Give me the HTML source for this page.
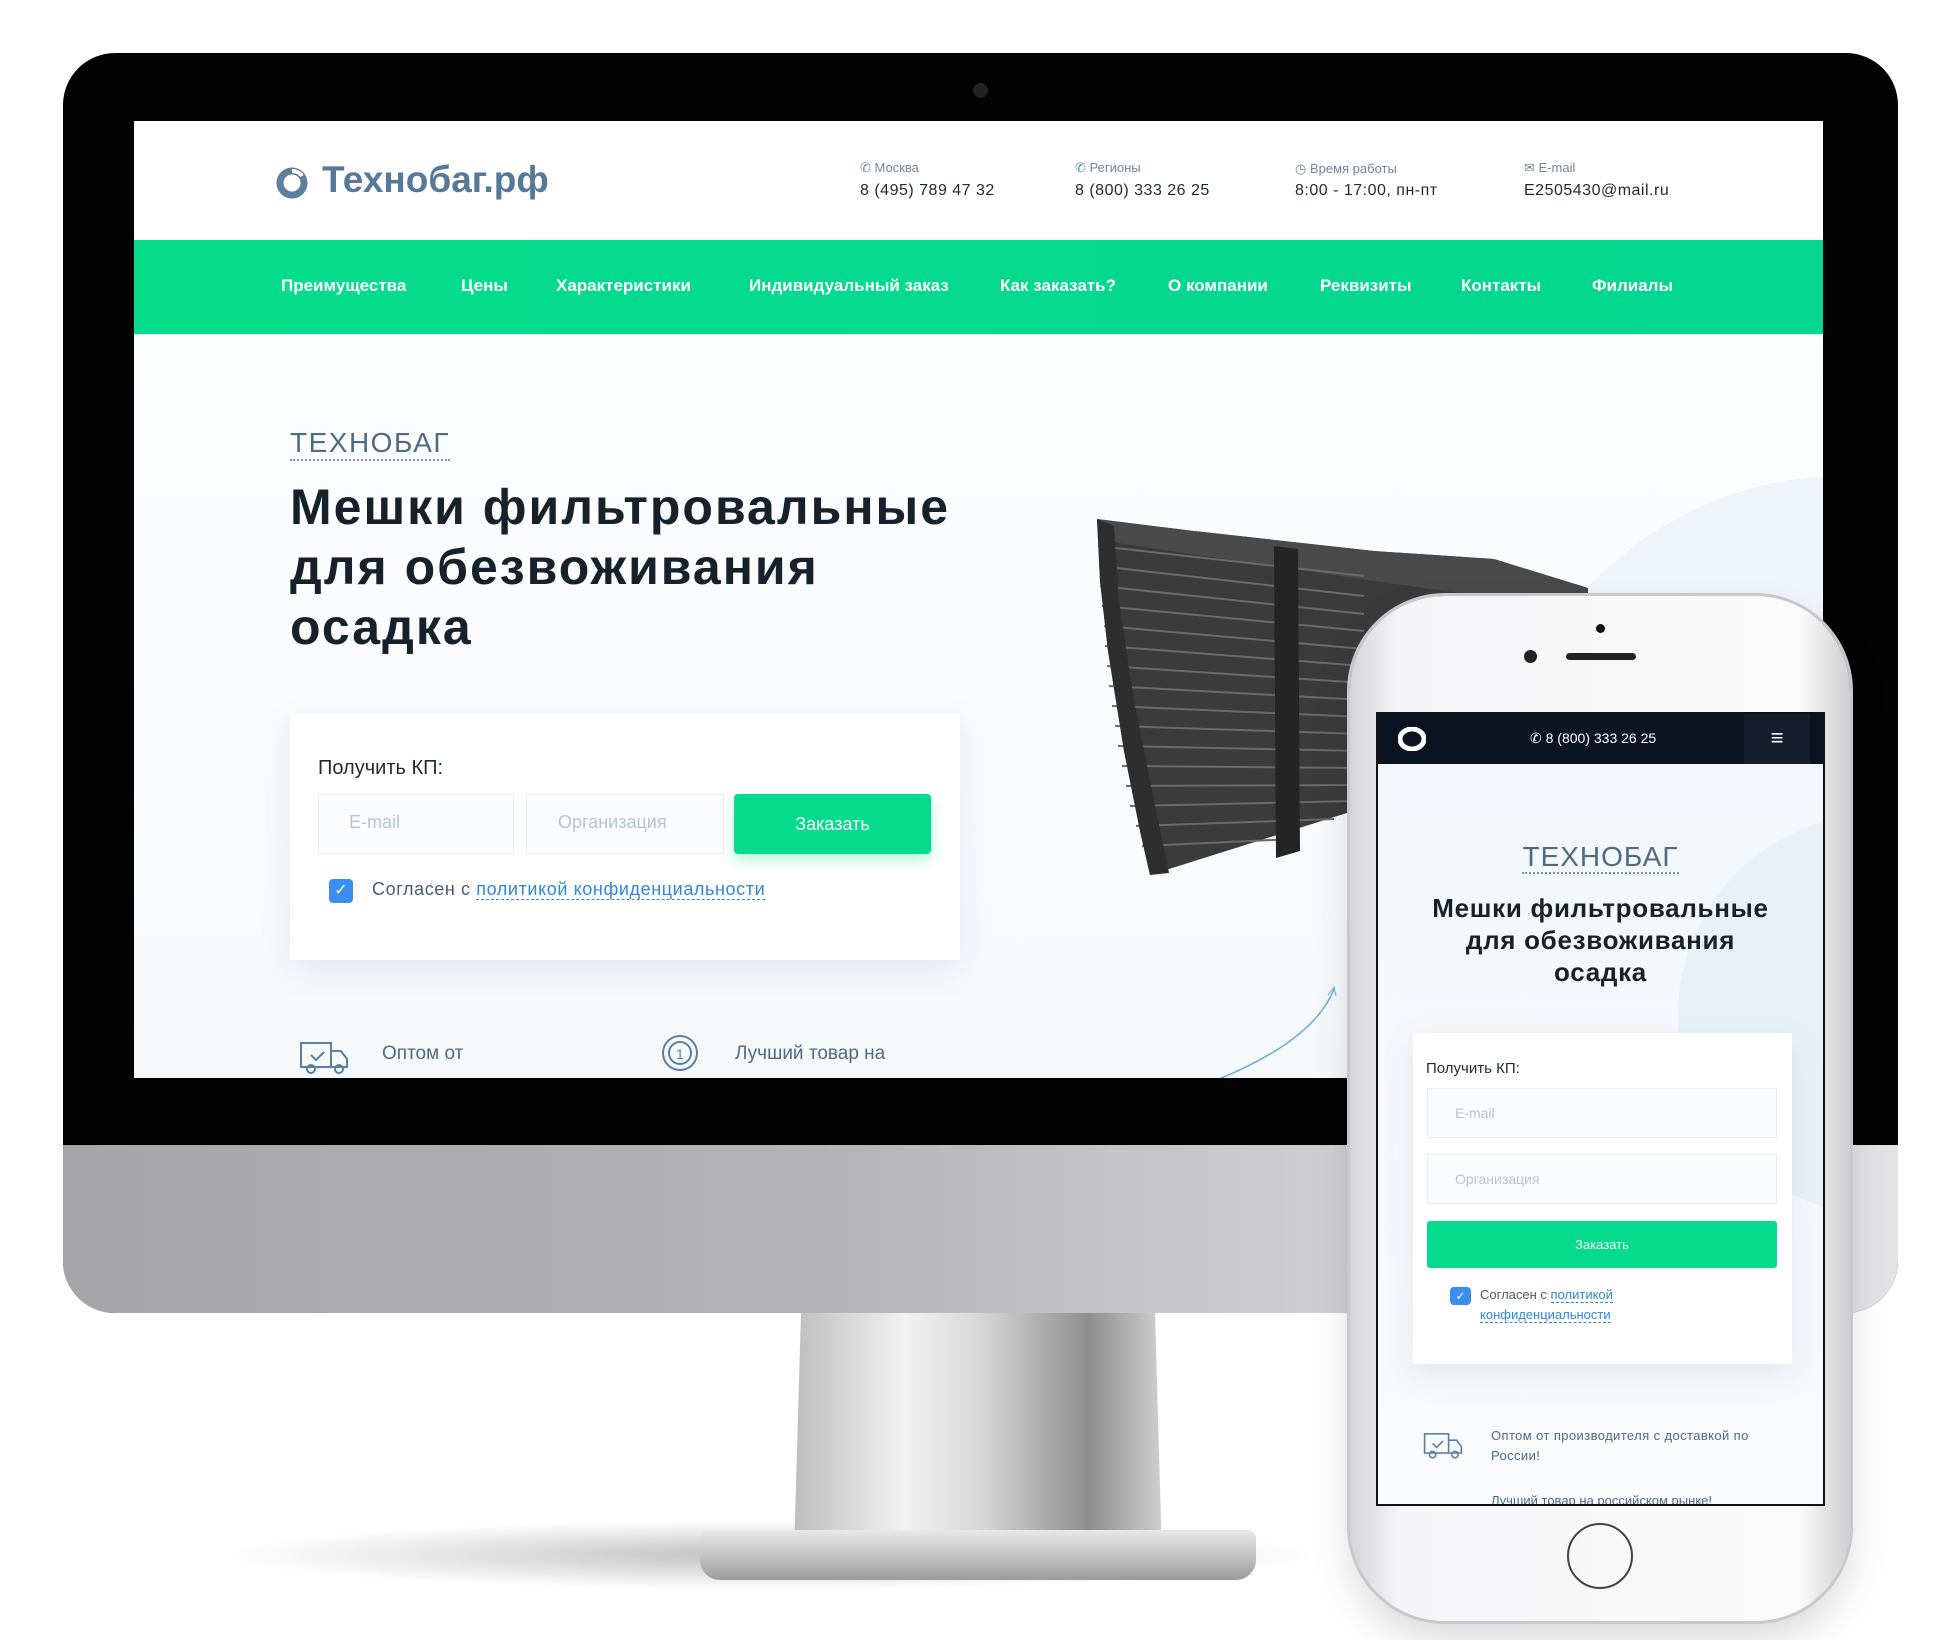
<!DOCTYPE html>
<html><head><meta charset="utf-8"><style>
*{margin:0;padding:0;box-sizing:border-box}
body{width:1960px;height:1640px;background:#fff;position:relative;overflow:hidden;font-family:"Liberation Sans",sans-serif}
.a{position:absolute}
.nav span{position:absolute;top:276px;color:#fff;font-size:17px;font-weight:bold;white-space:nowrap}
.lab{font-size:13px;color:#6f86a0}
.val{font-size:16px;color:#1d2a36}
</style></head><body>
<div class="a" style="left:220px;top:1520px;width:1100px;height:70px;border-radius:50%;background:radial-gradient(ellipse,rgba(0,0,0,.25),rgba(0,0,0,0) 70%)"></div>
<div class="a" style="left:794px;top:1300px;width:368px;height:255px;background:linear-gradient(90deg,#bdbdbd,#f2f2f2 30%,#d8d8d8 50%,#8e8e8e 80%,#cfcfcf);clip-path:polygon(2% 0,98% 0,100% 100%,0 100%)"></div>
<div class="a" style="left:700px;top:1530px;width:556px;height:50px;border-radius:8px 8px 20px 20px;background:linear-gradient(180deg,#e8e8e8,#bdbdbd 60%,#9a9a9a)"></div>
<div class="a" style="left:63px;top:53px;width:1835px;height:1260px;border-radius:52px;background:#030303;overflow:hidden">
  <div class="a" style="left:0;top:1092px;width:100%;height:168px;background:linear-gradient(90deg,#a6a6a9,#b3b3b6 40%,#d0d0d2 70%,#e4e4e6)"></div>
</div>
<div class="a" style="left:973px;top:83px;width:15px;height:15px;border-radius:50%;background:#222"></div>
<div class="a" style="left:134px;top:121px;width:1689px;height:957px;background:linear-gradient(180deg,#fff,#f6f9fc);overflow:hidden">
  <div class="a" style="left:1360px;top:355px;width:700px;height:700px;border-radius:50%;background:#eef4f9"></div>
  <div class="a" style="left:0;top:0;width:100%;height:119px;background:#fff"></div>
  <svg class="a" style="left:141px;top:45px" width="34" height="34" viewBox="0 0 34 34"><circle cx="17" cy="17" r="12" fill="none" stroke="#5d7e9c" stroke-width="7"/><path d="M17 5 A12 12 0 0 1 27 10" stroke="#fff" stroke-width="4" fill="none"/></svg>
  <div class="a" style="left:188px;top:38px;font-size:37px;font-weight:bold;color:#56799a">Технобаг.рф</div>
  <div class="a lab" style="left:726px;top:39px">✆ Москва</div><div class="a val" style="left:726px;top:61px;letter-spacing:.5px">8 (495) 789 47 32</div>
  <div class="a lab" style="left:941px;top:39px">✆ Регионы</div><div class="a val" style="left:941px;top:61px;letter-spacing:.5px">8 (800) 333 26 25</div>
  <div class="a lab" style="left:1161px;top:40px">◷ Время работы</div><div class="a val" style="left:1161px;top:61px;letter-spacing:.5px">8:00 - 17:00, пн-пт</div>
  <div class="a lab" style="left:1390px;top:39px">✉ E-mail</div><div class="a val" style="left:1390px;top:61px;letter-spacing:.5px">E2505430@mail.ru</div>
  <div class="a" style="left:0;top:119px;width:100%;height:94px;background:linear-gradient(90deg,#05dc8c,#02d68f)"></div>
  <div class="nav" style="position:absolute;left:-134px;top:-121px">
    <span style="left:281px">Преимущества</span><span style="left:461px">Цены</span><span style="left:556px">Характеристики</span><span style="left:749px">Индивидуальный заказ</span><span style="left:1000px">Как заказать?</span><span style="left:1168px">О компании</span><span style="left:1320px">Реквизиты</span><span style="left:1461px">Контакты</span><span style="left:1592px">Филиалы</span>
  </div>
  <div class="a" style="left:156px;top:306px;font-size:28px;color:#4d6a86;letter-spacing:1.5px;border-bottom:2px dotted #7b93aa;line-height:32px">ТЕХНОБАГ</div>
  <div class="a" style="left:156px;top:356px;font-size:50px;font-weight:bold;color:#17212b;line-height:60px;letter-spacing:2px">Мешки фильтровальные<br>для обезвоживания<br>осадка</div>
  <div class="a" style="left:156px;top:592px;width:670px;height:247px;background:#fff;box-shadow:0 10px 30px rgba(80,100,130,.12)"></div>
  <div class="a" style="left:184px;top:636px;font-size:20px;color:#1d2a36">Получить КП:</div>
  <div class="a" style="left:184px;top:673px;width:196px;height:60px;border:1px solid #e6ebf0;background:#fbfcfd;color:#b7c4cf;font-size:18px;padding:17px 30px">E-mail</div>
  <div class="a" style="left:392px;top:673px;width:198px;height:60px;border:1px solid #e6ebf0;background:#fbfcfd;color:#b7c4cf;font-size:18px;padding:17px 31px">Организация</div>
  <div class="a" style="left:600px;top:673px;width:197px;height:60px;border-radius:4px;background:#05db8c;color:#fff;font-size:18px;text-align:center;line-height:60px;box-shadow:0 6px 14px rgba(5,219,140,.3)">Заказать</div>
  <div class="a" style="left:195px;top:758px;width:24px;height:24px;border-radius:4px;background:#3b8ef0;color:#fff;font-size:16px;text-align:center;line-height:24px">✓</div>
  <div class="a" style="left:238px;top:758px;font-size:18px;color:#4a5c6d;letter-spacing:.6px">Согласен с <span style="color:#2f86e0;border-bottom:1px dashed #2f86e0">политикой конфиденциальности</span></div>
  <svg class="a" style="left:163px;top:916px" width="54" height="40" viewBox="0 0 54 40" fill="none" stroke="#5a7fa2" stroke-width="2"><rect x="4" y="6" width="30" height="24"/><path d="M34 14h10l6 8v8H34"/><circle cx="14" cy="32" r="4"/><circle cx="42" cy="32" r="4"/><path d="M14 18l5 5 8-8"/></svg>
  <div class="a" style="left:248px;top:922px;font-size:19px;color:#4d6a86">Оптом от</div>
  <svg class="a" style="left:524px;top:912px" width="44" height="48" viewBox="0 0 44 48" fill="none" stroke="#5a7fa2" stroke-width="2"><circle cx="22" cy="20" r="17"/><circle cx="22" cy="20" r="11"/><text x="18" y="26" font-size="14" fill="#5a7fa2" stroke="none" font-family="Liberation Sans">1</text></svg>
  <div class="a" style="left:601px;top:922px;font-size:19px;color:#4d6a86">Лучший товар на</div>
  <svg class="a" style="left:1060px;top:860px" width="240" height="100" viewBox="0 0 240 100"><path d="M20 100 Q120 60 140 8" stroke="#6aa6e8" stroke-width="1.5" fill="none"/><path d="M134 14l6-8 2 9" stroke="#6aa6e8" fill="none"/></svg>
  <svg class="a" style="left:940px;top:380px" width="560" height="400" viewBox="0 0 560 400">
    <path d="M23 18 L120 30 L300 50 L420 58 L514 87 L514 250 L276 311 L76 374 L66 330 L50 250 L34 150 L26 80 Z" fill="#3b3b3b"/>
    <path d="M23 18 L120 30 L300 50 L420 58 L514 87 L514 110 L300 80 L30 40 Z" fill="#4a4a4a"/>
    <g stroke="#6a6a6a" stroke-width="2" fill="none">
      <path d="M24 45 L290 75"/><path d="M25 65 L290 95"/><path d="M26 85 L290 113"/><path d="M28 105 L290 130"/><path d="M30 125 L290 148"/><path d="M31 145 L290 165"/><path d="M33 165 L290 182"/><path d="M35 185 L290 199"/><path d="M38 205 L290 216"/><path d="M41 225 L290 233"/><path d="M44 245 L290 250"/><path d="M48 265 L290 267"/><path d="M52 285 L290 284"/><path d="M56 305 L280 300"/><path d="M62 325 L260 318"/><path d="M68 345 L220 338"/>
    </g>
    <g fill="#242424"><path d="M200 45 L224 48 L226 350 L202 357 Z"/></g>
    <path d="M23 18 L26 80 L34 150 L50 250 L66 330 L76 374 L95 372 L80 300 L60 200 L45 100 L40 25 Z" fill="#2e2e2e"/>
  </svg>
</div>
<div class="a" style="left:1350px;top:596px;width:500px;height:1025px;border-radius:95px;background:linear-gradient(90deg,#d4d4d6,#f5f5f7 10%,#fafafa 90%,#cfcfd1);box-shadow:0 0 0 3px #c8c8ca,0 20px 40px rgba(0,0,0,.15)"></div>
<div class="a" style="left:1596px;top:624px;width:9px;height:9px;border-radius:50%;background:#111"></div>
<div class="a" style="left:1524px;top:650px;width:13px;height:13px;border-radius:50%;background:#222"></div>
<div class="a" style="left:1566px;top:653px;width:70px;height:7px;border-radius:4px;background:#222"></div>
<div class="a" style="left:1567px;top:1523px;width:66px;height:66px;border-radius:50%;border:2px solid #444"></div>
<div class="a" style="left:1376px;top:712px;width:449px;height:794px;background:linear-gradient(180deg,#f3f7fb,#f8fafc);overflow:hidden;border:2px solid #111">
  <div class="a" style="left:300px;top:100px;width:400px;height:400px;border-radius:50%;background:#e9f1f8"></div>
  <div class="a" style="left:0;top:0;width:100%;height:50px;background:#0b1321"></div>
  <div class="a" style="left:366px;top:0;width:66px;height:50px;background:#151e2e;color:#fff;font-size:22px;text-align:center;line-height:48px">≡</div>
  <svg class="a" style="left:20px;top:13px" width="28" height="24" viewBox="0 0 28 24"><ellipse cx="14" cy="12" rx="12" ry="10" fill="none" stroke="#fff" stroke-width="5"/></svg>
  <div class="a" style="left:152px;top:16px;font-size:14px;color:#fff">✆ 8 (800) 333 26 25</div>
  <div class="a" style="left:0;top:128px;width:100%;text-align:center"><span style="font-size:28px;color:#4d6a86;letter-spacing:1px;border-bottom:2px dotted #7b93aa;line-height:30px">ТЕХНОБАГ</span></div>
  <div class="a" style="left:0;top:178px;width:100%;text-align:center;font-size:26px;font-weight:bold;color:#17212b;line-height:32px;letter-spacing:.7px">Мешки фильтровальные<br>для обезвоживания<br>осадка</div>
  <div class="a" style="left:35px;top:319px;width:379px;height:331px;background:#fff;box-shadow:0 10px 30px rgba(80,100,130,.12)"></div>
  <div class="a" style="left:48px;top:346px;font-size:15px;color:#1d2a36">Получить КП:</div>
  <div class="a" style="left:49px;top:374px;width:350px;height:50px;border:1px solid #e8edf2;background:#fbfcfd;color:#b7c4cf;font-size:14px;padding:16px 27px">E-mail</div>
  <div class="a" style="left:49px;top:440px;width:350px;height:50px;border:1px solid #e8edf2;background:#fbfcfd;color:#b7c4cf;font-size:14px;padding:16px 27px">Организация</div>
  <div class="a" style="left:49px;top:507px;width:350px;height:47px;border-radius:3px;background:#05db8c;color:#fff;font-size:13px;text-align:center;line-height:47px">Заказать</div>
  <div class="a" style="left:72px;top:573px;width:21px;height:18px;border-radius:4px;background:#3b8ef0;color:#fff;font-size:12px;text-align:center;line-height:18px">✓</div>
  <div class="a" style="left:102px;top:571px;font-size:13px;color:#4a5c6d;line-height:20px">Согласен с <span style="color:#2f86e0;border-bottom:1px dashed #2f86e0">политикой</span><br><span style="color:#2f86e0;border-bottom:1px dashed #2f86e0">конфиденциальности</span></div>
  <svg class="a" style="left:42px;top:715px" width="46" height="32" viewBox="0 0 54 40" fill="none" stroke="#5a7fa2" stroke-width="2"><rect x="4" y="6" width="30" height="24"/><path d="M34 14h10l6 8v8H34"/><circle cx="14" cy="32" r="4"/><circle cx="42" cy="32" r="4"/><path d="M14 18l5 5 8-8"/></svg>
  <div class="a" style="left:113px;top:712px;font-size:13px;color:#4d6a86;line-height:20px;letter-spacing:.4px">Оптом от производителя с доставкой по<br>России!</div>
  <div class="a" style="left:113px;top:779px;font-size:13px;color:#4d6a86">Лучший товар на российском рынке!</div>
</div>
</body></html>
